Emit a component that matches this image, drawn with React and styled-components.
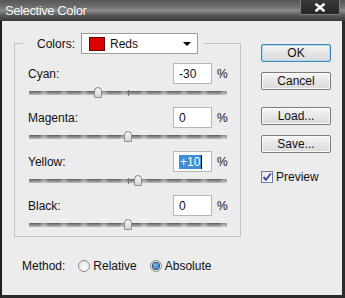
import React from "react";
import styled, { createGlobalStyle } from "styled-components";

const channels = [
  { name: "Cyan", value: -30 },
  { name: "Magenta", value: 0 },
  { name: "Yellow", value: 10, selected: true },
  { name: "Black", value: 0 },
];

const fmt = (v) => (v > 0 ? `+${v}` : `${v}`);

const App = () => {
  return (
    <>
      <Global />
      <Window>
        <TitleBar>
          <Title>Selective Color</Title>
          <CloseButton>
            <svg width="12" height="9" viewBox="0 0 12 9">
              <path d="M1.5 0.8 L10.5 8.2 M10.5 0.8 L1.5 8.2" stroke="#fff" strokeWidth="2.6" />
            </svg>
          </CloseButton>
        </TitleBar>
        <Frame>
          <Main>
            <Group>
              <Legend>
                <LegendInner>
                  <span>Colors:</span>
                  <Dropdown>
                    <Swatch />
                    <DropText>Reds</DropText>
                    <Arrow />
                  </Dropdown>
                </LegendInner>
              </Legend>
              <Rows>
                {channels.map((c) => (
                  <Channel key={c.name}>
                    <LabelRow>
                      <Label>{c.name}:</Label>
                      <Field>
                        {c.selected ? (
                          <>
                            <Selected>{fmt(c.value)}</Selected>
                            <Caret />
                          </>
                        ) : (
                          fmt(c.value)
                        )}
                      </Field>
                      <Percent>%</Percent>
                    </LabelRow>
                    <Slider>
                      <Track />
                      <Tick />
                      <Thumb style={{ left: `${((c.value + 100) / 200) * 100}%` }} />
                    </Slider>
                  </Channel>
                ))}
              </Rows>
            </Group>
            <Side>
              <Button $focus>OK</Button>
              <Button $gap={10}>Cancel</Button>
              <Button $gap={17}>Load...</Button>
              <Button $gap={10}>Save...</Button>
              <Check>
                <Box>
                  <svg width="10" height="10" viewBox="0 0 10 10">
                    <path d="M1.5 5 L4 7.8 L8.8 1.5" stroke="#3b4fa8" strokeWidth="2" fill="none" />
                  </svg>
                </Box>
                Preview
              </Check>
            </Side>
          </Main>
          <Method>
            <span>Method:</span>
            <Option>
              <Radio />
              Relative
            </Option>
            <Option>
              <Radio $checked />
              Absolute
            </Option>
          </Method>
        </Frame>
      </Window>
    </>
  );
};

export default App;

const Global = createGlobalStyle`
  * { box-sizing: border-box; }
  body {
    margin: 0;
    font-family: "Liberation Sans", Arial, sans-serif;
    font-size: 12px;
    color: #111;
  }
`;

const Window = styled.div`
  width: 345px;
  height: 298px;
  display: flex;
  flex-direction: column;
`;

const TitleBar = styled.div`
  height: 21px;
  display: flex;
  justify-content: space-between;
  align-items: flex-start;
  padding-left: 5px;
  background: linear-gradient(180deg, #575757 0%, #6c6c6c 30%, #8a8a8a 50%, #5a5a5a 72%, #3a3a3a 100%);
`;

const Title = styled.div`
  color: #fff;
  font-size: 13px;
  letter-spacing: -0.4px;
  line-height: 21px;
  text-shadow: 0 0 1px rgba(0, 0, 0, 0.4);
`;

const CloseButton = styled.div`
  width: 40px;
  height: 15px;
  margin-right: 5px;
  background: linear-gradient(180deg, #3a3a3a, #262626);
  border: 1px solid #7c7c7c;
  border-top: none;
  display: flex;
  align-items: center;
  justify-content: center;
`;

const Frame = styled.div`
  flex: 1;
  display: flex;
  flex-direction: column;
  background: #ececec;
  border-left: 2px solid #1e1e1e;
  border-right: 3px solid #2b2b2b;
  border-bottom: 3px solid #2b2b2b;
  padding: 12px 11px 0 12px;
`;

const Main = styled.div`
  display: flex;
  gap: 20px;
`;

const Group = styled.fieldset`
  width: 227px;
  margin: 0;
  padding: 9px 12px 5px 13px;
  border: 1px solid #c4c4c4;
`;

const Legend = styled.legend`
  margin-left: -5px;
  padding: 0 6px 0 14px;
`;

const LegendInner = styled.div`
  display: flex;
  align-items: center;
`;

const Dropdown = styled.div`
  width: 117px;
  height: 21px;
  margin-left: 6px;
  display: flex;
  align-items: center;
  padding-left: 7px;
  background: #fff;
  border: 1px solid #9c9c9c;
`;

const Swatch = styled.div`
  width: 16px;
  height: 14px;
  background: #dc0000;
  border: 1px solid #6a0000;
`;

const DropText = styled.span`
  margin-left: 5px;
`;

const Arrow = styled.div`
  margin-left: auto;
  margin-right: 6px;
  width: 0;
  height: 0;
  border-left: 4px solid transparent;
  border-right: 4px solid transparent;
  border-top: 4px solid #000;
`;

const Rows = styled.div`
  display: flex;
  flex-direction: column;
  gap: 8px;
`;

const Channel = styled.div`
  display: flex;
  flex-direction: column;
`;

const LabelRow = styled.div`
  display: flex;
  align-items: center;
  height: 21px;
`;

const Label = styled.span`
  flex: 1;
`;

const Field = styled.div`
  width: 39px;
  height: 21px;
  display: flex;
  align-items: center;
  padding-left: 5px;
  background: #fff;
  border: 1px solid #b6b6b6;
`;

const Selected = styled.span`
  background: #3d8ed6;
  color: #fff;
  line-height: 14px;
  padding: 0 1px;
`;

const Caret = styled.span`
  width: 1px;
  height: 14px;
  background: #000;
`;

const Percent = styled.span`
  margin-left: 5px;
  width: 11px;
`;

const Slider = styled.div`
  position: relative;
  height: 15px;
  margin: 0 1px;
`;

const Track = styled.div`
  position: absolute;
  left: 0;
  right: 0;
  top: 7px;
  height: 4px;
  background:
    repeating-linear-gradient(90deg, rgba(255, 255, 255, 0) 0 10px, rgba(255, 255, 255, 0.35) 15px, rgba(255, 255, 255, 0) 20px),
    linear-gradient(180deg, #5c5c5c, #8c8c8c 50%, #bcbcbc);
  border-radius: 1px;
`;

const Tick = styled.div`
  position: absolute;
  left: 50%;
  top: 6px;
  width: 1px;
  height: 6px;
  background: #7a7a7a;
`;

const Thumb = styled.div`
  position: absolute;
  top: 3px;
  width: 8px;
  height: 11px;
  margin-left: -4px;
  background: linear-gradient(180deg, #f4f4f4, #d6d6d6);
  border: 1px solid #8a8a8a;
  border-radius: 4px 4px 1px 1px;
`;

const Side = styled.div`
  width: 70px;
  margin-top: 11px;
  display: flex;
  flex-direction: column;
`;

const Button = styled.div`
  height: 18px;
  margin-top: ${(p) => p.$gap || 0}px;
  display: flex;
  align-items: center;
  justify-content: center;
  border: 1px solid ${(p) => (p.$focus ? "#3f86b4" : "#7a7a7a")};
  border-radius: 2px;
  background: linear-gradient(180deg, #f6f6f6, #e6e6e6 50%, #dadada);
  box-shadow: ${(p) => (p.$focus ? "inset 0 0 0 1px #a9dcef" : "inset 0 0 0 1px #fbfbfb")};
`;

const Check = styled.div`
  margin-top: 17px;
  display: flex;
  align-items: center;
  gap: 3px;
`;

const Box = styled.div`
  width: 12px;
  height: 12px;
  display: flex;
  align-items: center;
  justify-content: center;
  background: linear-gradient(135deg, #e4e4e4, #fff);
  border: 1px solid #6d7d99;
`;

const Method = styled.div`
  margin-top: 22px;
  padding-left: 8px;
  display: flex;
  align-items: center;
  height: 14px;
`;

const Option = styled.label`
  margin-left: 13px;
  display: flex;
  align-items: center;
  gap: 3px;
`;

const Radio = styled.span`
  position: relative;
  width: 12px;
  height: 12px;
  border-radius: 50%;
  border: 1px solid #8e8e8e;
  background: radial-gradient(circle at 60% 65%, #fff, #dcdcdc);

  &::after {
    content: "";
    display: ${(p) => (p.$checked ? "block" : "none")};
    position: absolute;
    left: 2px;
    top: 2px;
    width: 6px;
    height: 6px;
    border-radius: 50%;
    background: radial-gradient(circle at 40% 35%, #7cc4f5, #1d5ea6);
    box-shadow: 0 0 0 1px #26466e;
  }
`;
